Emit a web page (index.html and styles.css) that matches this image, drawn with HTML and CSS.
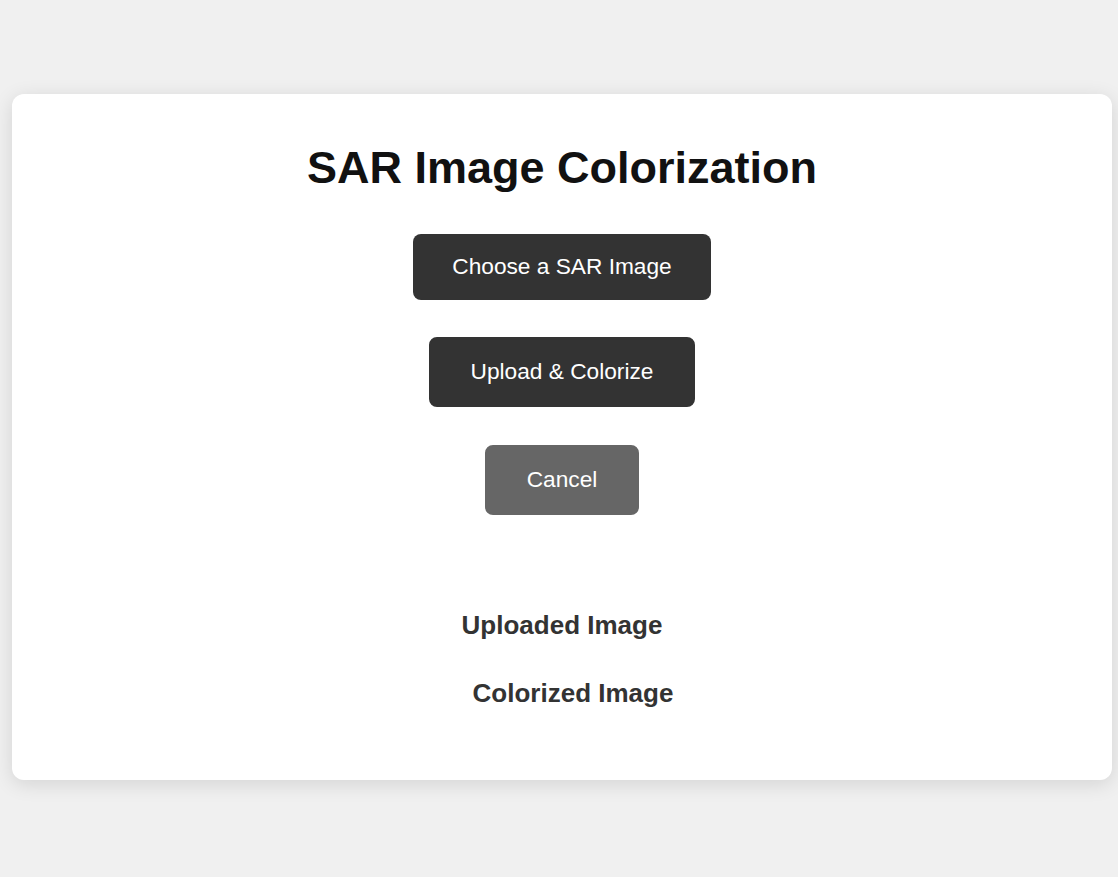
FILE: index.html
```html
<!DOCTYPE html>
<html lang="en">
<head>
<meta charset="utf-8">
<title>SAR Image Colorization</title>
<link rel="stylesheet" href="styles.css">
</head>
<body>
  <main class="card">
    <h1 class="title">SAR Image Colorization</h1>
    <label class="btn btn-choose">Choose a SAR Image</label>
    <button class="btn btn-upload" type="button">Upload &amp; Colorize</button>
    <button class="btn btn-cancel" type="button">Cancel</button>
    <section class="results">
      <h3 class="result-title">Uploaded Image</h3>
      <h3 class="result-title result-colorized">Colorized Image</h3>
    </section>
  </main>
</body>
</html>
```

FILE: styles.css
```css
html, body {
  margin: 0;
  padding: 0;
}

body {
  background: #f0f0f0;
  font-family: "Liberation Sans", Arial, sans-serif;
  padding: 94px 0 0 12px;
  min-height: 877px;
  box-sizing: border-box;
}

.card {
  width: 1100px;
  box-sizing: border-box;
  background: #ffffff;
  border-radius: 12px;
  box-shadow: 0 4px 20px rgba(0, 0, 0, 0.12);
  padding: 48px 0 72px;
  display: flex;
  flex-direction: column;
  align-items: center;
}

.title {
  margin: 0 0 41px;
  font-size: 45px;
  font-weight: bold;
  line-height: 51px;
  color: #111111;
}

.btn {
  display: inline-block;
  box-sizing: border-box;
  font-family: "Liberation Sans", Arial, sans-serif;
  font-size: 22.7px;
  line-height: 26px;
  color: #ffffff;
  background: #333333;
  border-radius: 8px;
  padding: 19px 40px 21px;
  cursor: pointer;
}

.btn-choose {
  padding: 19px 39px 21px;
  margin-bottom: 37px;
}

.btn-upload,
.btn-cancel {
  border: 2px solid #333333;
}

.btn-upload {
  margin-bottom: 38px;
}

.btn-cancel {
  background: #666666;
  border-color: #666666;
}

.results {
  margin-top: 95px;
  display: flex;
  flex-direction: column;
  align-items: center;
}

.result-title {
  margin: 0;
  font-size: 26px;
  font-weight: bold;
  line-height: 30px;
  color: #333333;
}

.result-colorized {
  margin-top: 38px;
  padding-left: 22px;
}
```
